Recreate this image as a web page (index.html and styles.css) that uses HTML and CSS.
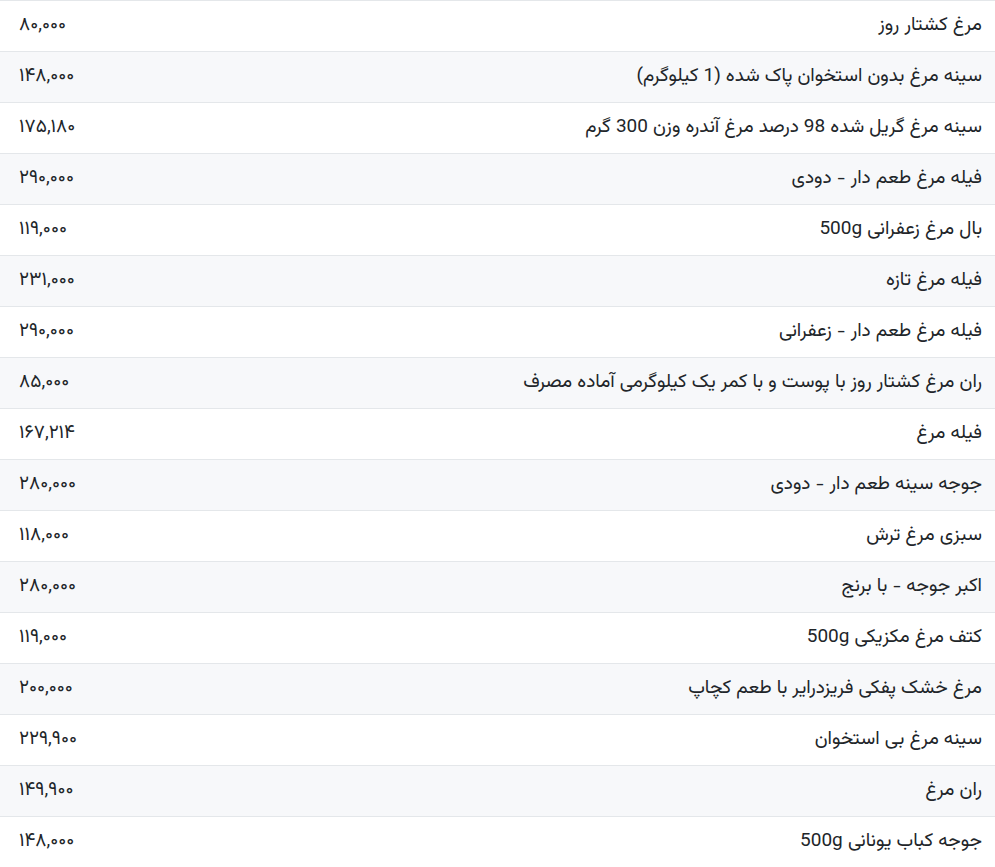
FILE: index.html
```html
<!DOCTYPE html>
<html lang="fa" dir="rtl">
<head>
<meta charset="utf-8">
<link rel="stylesheet" href="styles.css">
</head>
<body>
<table class="price-table">
<tbody>
<tr><td class="name">مرغ کشتار روز</td><td class="price">۸۰,۰۰۰</td></tr>
<tr><td class="name">سینه مرغ بدون استخوان پاک شده (1 کیلوگرم)</td><td class="price">۱۴۸,۰۰۰</td></tr>
<tr><td class="name">سینه مرغ گریل شده 98 درصد مرغ آندره وزن 300 گرم</td><td class="price">۱۷۵,۱۸۰</td></tr>
<tr><td class="name">فیله مرغ طعم دار - دودی</td><td class="price">۲۹۰,۰۰۰</td></tr>
<tr><td class="name">بال مرغ زعفرانی 500g</td><td class="price">۱۱۹,۰۰۰</td></tr>
<tr><td class="name">فیله مرغ تازه</td><td class="price">۲۳۱,۰۰۰</td></tr>
<tr><td class="name">فیله مرغ طعم دار - زعفرانی</td><td class="price">۲۹۰,۰۰۰</td></tr>
<tr><td class="name">ران مرغ کشتار روز با پوست و با کمر یک کیلوگرمی آماده مصرف</td><td class="price">۸۵,۰۰۰</td></tr>
<tr><td class="name">فیله مرغ</td><td class="price">۱۶۷,۲۱۴</td></tr>
<tr><td class="name">جوجه سینه طعم دار - دودی</td><td class="price">۲۸۰,۰۰۰</td></tr>
<tr><td class="name">سبزی مرغ ترش</td><td class="price">۱۱۸,۰۰۰</td></tr>
<tr><td class="name">اکبر جوجه - با برنج</td><td class="price">۲۸۰,۰۰۰</td></tr>
<tr><td class="name">کتف مرغ مکزیکی 500g</td><td class="price">۱۱۹,۰۰۰</td></tr>
<tr><td class="name">مرغ خشک پفکی فریزدرایر با طعم کچاپ</td><td class="price">۲۰۰,۰۰۰</td></tr>
<tr><td class="name">سینه مرغ بی استخوان</td><td class="price">۲۲۹,۹۰۰</td></tr>
<tr><td class="name">ران مرغ</td><td class="price">۱۴۹,۹۰۰</td></tr>
<tr><td class="name">جوجه کباب یونانی 500g</td><td class="price">۱۴۸,۰۰۰</td></tr>
</tbody>
</table>
</body>
</html>
```
FILE: styles.css
```css
html, body {
  margin: 0;
  padding: 0;
  background: #ffffff;
}
body {
  font-family: "Vazirmatn", "Noto Sans Arabic", "DejaVu Sans", sans-serif;
  color: #212529;
  font-size: 19px;
}
.price-table {
  width: 100%;
  border-collapse: collapse;
  direction: rtl;
}
.price-table td {
  border-top: 1px solid #e4e7ea;
  padding: 13px 0;
  line-height: 24px;
  height: 24px;
  vertical-align: middle;
  white-space: nowrap;
}
.price-table tr:nth-child(even) td {
  background: #f7f8fa;
}
.price-table .name {
  text-align: right;
  padding-right: 13px;
}
.price-table .price {
  text-align: left;
  padding-left: 19px;
  width: 150px;
}
```
